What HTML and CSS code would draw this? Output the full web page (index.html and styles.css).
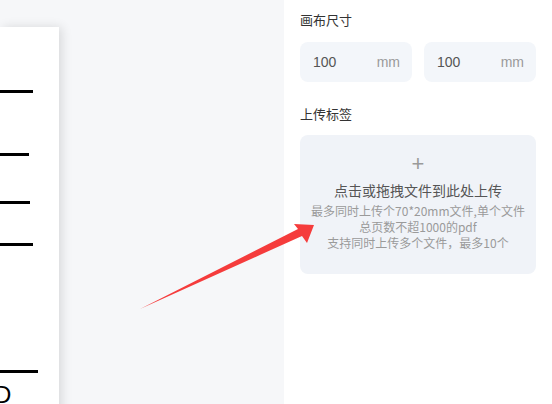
FILE: index.html
```html
<!DOCTYPE html>
<html lang="zh-CN">
<head>
    <meta charset="UTF-8">
    <title>标签设计</title>
    <link rel="stylesheet" href="styles.css">
</head>
<body>
    <div class="workspace">
        <div class="canvas-area">
            <div class="paper">
                <div class="rule rule-1"></div>
                <div class="rule rule-2"></div>
                <div class="rule rule-3"></div>
                <div class="rule rule-4"></div>
                <div class="rule rule-5"></div>
                <div class="paper-char">D</div>
            </div>
        </div>
        <div class="side-panel">
            <div class="field-label">画布尺寸</div>
            <div class="size-row">
                <div class="size-input"><span class="num">100</span><span class="unit">mm</span></div>
                <div class="size-input"><span class="num">100</span><span class="unit">mm</span></div>
            </div>
            <div class="field-label upload-label">上传标签</div>
            <div class="upload-box">
                <div class="plus">+</div>
                <div class="upload-title">点击或拖拽文件到此处上传</div>
                <div class="upload-tip">最多同时上传个70*20mm文件,单个文件<br>总页数不超1000的pdf<br>支持同时上传多个文件，最多10个</div>
            </div>
        </div>
    </div>
    <svg class="arrow" width="552" height="404" viewBox="0 0 552 404">
        <path d="M140 309 L298 229 L294 224 L314 225 L307 243 L302 236 Z" fill="#f53c3c"/>
    </svg>
</body>
</html>
```

FILE: styles.css
```css
body {
    margin: 0;
    font-family: "Noto Sans CJK SC", "Noto Sans", sans-serif;
    width: 552px;
    height: 404px;
    overflow: hidden;
    position: relative;
}

.workspace {
    display: flex;
    height: 404px;
}

.canvas-area {
    width: 284px;
    background-color: #f6f7f9;
    padding-top: 27px;
    box-sizing: border-box;
    overflow: hidden;
}

.paper {
    width: 59px;
    height: 400px;
    background-color: #ffffff;
    box-shadow: 3px 0 10px rgba(0, 0, 0, 0.12);
    position: relative;
    overflow: hidden;
}

.rule {
    height: 3px;
    background-color: #000000;
    position: absolute;
    left: 0;
}

.rule-1 { top: 63px; width: 33px; }
.rule-2 { top: 126px; width: 29px; }
.rule-3 { top: 174px; width: 30px; }
.rule-4 { top: 216px; width: 33px; }
.rule-5 { top: 343px; width: 38px; }

.paper-char {
    position: absolute;
    left: -6px;
    top: 354px;
    font-family: "Liberation Sans", sans-serif;
    font-size: 24px;
    line-height: 28px;
    color: #000000;
}

.side-panel {
    flex: 1;
    background-color: #ffffff;
    padding: 10px 16px 0 16px;
}

.field-label {
    font-size: 13px;
    color: #333333;
    line-height: 20px;
}

.size-row {
    display: flex;
    gap: 12px;
    margin-top: 12px;
}

.size-input {
    width: 112px;
    height: 40px;
    border-radius: 8px;
    background-color: #f3f6fa;
    display: flex;
    align-items: center;
    justify-content: space-between;
    padding: 0 12px 0 13px;
    box-sizing: border-box;
    font-family: "Liberation Sans", sans-serif;
}

.num {
    font-size: 14px;
    color: #555555;
}

.unit {
    font-size: 14px;
    color: #9a9a9a;
}

.upload-label {
    margin-top: 22px;
}

.upload-box {
    margin-top: 11px;
    width: 236px;
    height: 139px;
    border-radius: 8px;
    background-color: #f0f3f8;
    text-align: center;
    box-sizing: border-box;
    padding-top: 19px;
}

.plus {
    font-family: "Liberation Sans", sans-serif;
    font-size: 22px;
    line-height: 20px;
    color: #9a9a9a;
}

.upload-title {
    font-size: 14px;
    color: #555555;
    margin-top: 6px;
    line-height: 20px;
}

.upload-tip {
    font-size: 12px;
    color: #9a9a9a;
    line-height: 16px;
    margin-top: 3px;
}

.arrow {
    position: absolute;
    left: 0;
    top: 0;
    pointer-events: none;
}
```
